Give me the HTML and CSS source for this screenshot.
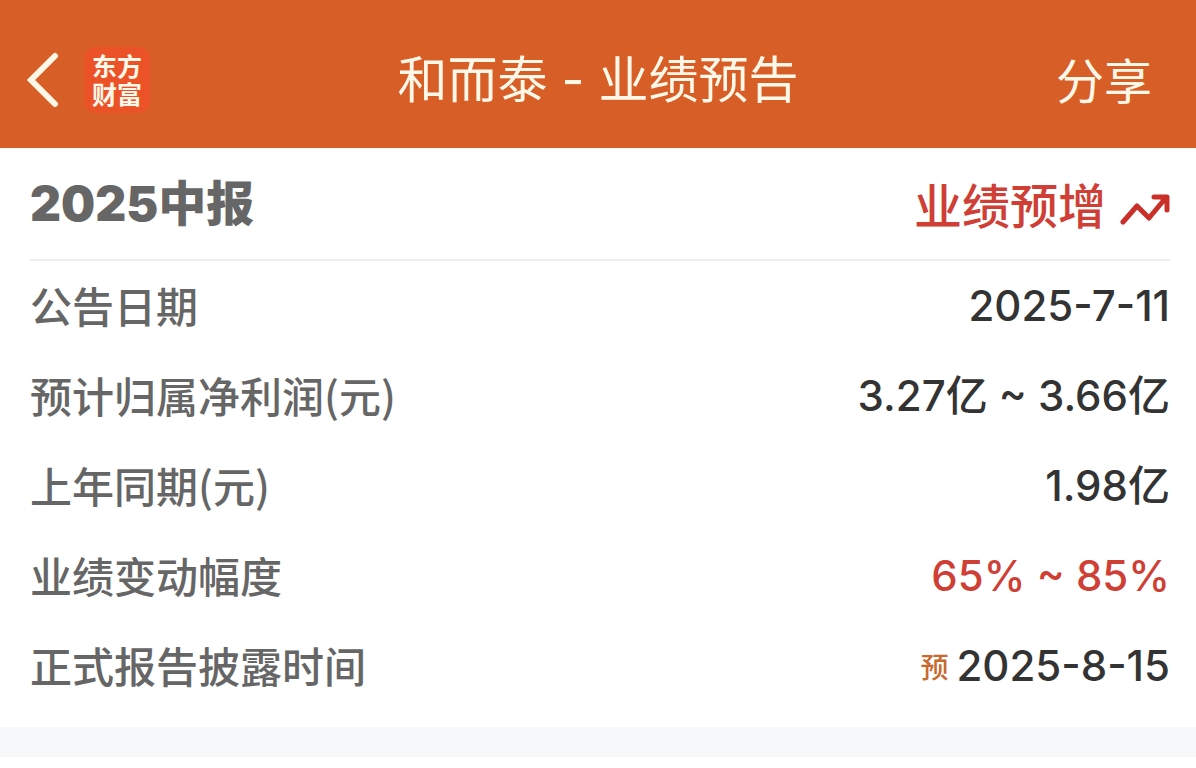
FILE: index.html
```html
<!DOCTYPE html>
<html lang="zh-CN">
<head>
    <meta charset="UTF-8">
    <meta name="viewport" content="width=device-width, initial-scale=1.0">
    <title>和而泰 - 业绩预告</title>
    <link rel="stylesheet" href="styles.css">
</head>
<body>
    <header class="navbar">
        <div class="nav-left">
            <button class="back" type="button" aria-label="返回">
                <svg width="34" height="56" viewBox="0 0 34 56" fill="none" stroke="currentColor" stroke-width="6" stroke-linecap="round" stroke-linejoin="miter">
                    <path d="M29 4L5 28L29 52"/>
                </svg>
            </button>
            <div class="logo">东方<br>财富</div>
        </div>
        <h1>和而泰 - 业绩预告</h1>
        <button class="share" type="button">分享</button>
    </header>

    <main class="report">
        <div class="report-head">
            <h2>2025中报</h2>
            <div class="trend">
                <span>业绩预增</span>
                <svg width="50" height="32" viewBox="0 0 50 32" fill="none" stroke="currentColor" stroke-width="5" stroke-linecap="round" stroke-linejoin="round">
                    <path d="M3 28L17 12L29 24L44 6"/>
                    <path d="M34 3H47V16"/>
                    <path d="M38 3H47V12Z" fill="currentColor" stroke="none"/>
                </svg>
            </div>
        </div>
        <dl class="rows">
            <div class="row">
                <dt>公告日期</dt>
                <dd>2025-7-11</dd>
            </div>
            <div class="row">
                <dt>预计归属净利润(元)</dt>
                <dd>3.27亿 ~ 3.66亿</dd>
            </div>
            <div class="row">
                <dt>上年同期(元)</dt>
                <dd>1.98亿</dd>
            </div>
            <div class="row">
                <dt>业绩变动幅度</dt>
                <dd class="up">65% ~ 85%</dd>
            </div>
            <div class="row">
                <dt>正式报告披露时间</dt>
                <dd><span class="tag">预</span>2025-8-15</dd>
            </div>
        </dl>
    </main>
    <div class="divider"></div>
</body>
</html>
```

FILE: styles.css
```css
body {
    margin: 0;
    background: #fff;
    color: #333;
    font-family: "Noto Sans CJK SC", sans-serif;
}

button {
    padding: 0;
    border: 0;
    background: none;
    color: inherit;
    font-family: inherit;
}

h1, h2, dl, dd {
    margin: 0;
}

.navbar {
    display: grid;
    grid-template-columns: 1fr auto 1fr;
    align-items: center;
    padding: 40px 26px 28px;
    background: #d75f27;
    color: #fff8e8;
}

.nav-left {
    display: flex;
    align-items: center;
    gap: 24px;
}

.back {
    display: flex;
}

.logo {
    width: 66px;
    padding: 4px 0 6px;
    border-radius: 12px;
    background: #ec5228;
    font-size: 25px;
    font-weight: 700;
    line-height: 28px;
    text-align: center;
}

h1 {
    font-family: "Inter", "Noto Sans CJK SC", sans-serif;
    font-size: 50px;
    font-weight: 400;
    line-height: 80px;
}

.share {
    justify-self: end;
    margin: 0 18px 4px 0;
    font-size: 48px;
    line-height: 76px;
}

.report {
    padding: 0 26px 16px 30px;
}

.report-head {
    display: flex;
    align-items: center;
    justify-content: space-between;
    border-bottom: 2px solid #eee;
    line-height: 111px;
}

h2 {
    color: #666;
    font-family: "Inter", "Noto Sans CJK SC", sans-serif;
    font-size: 48px;
    font-weight: 900;
}

.trend {
    display: flex;
    align-items: center;
    gap: 14px;
    color: #cf3f36;
    font-size: 48px;
    font-weight: 500;
}

.trend svg {
    margin-top: 12px;
    color: #c9302a;
}

.row {
    display: flex;
    align-items: center;
    justify-content: space-between;
    line-height: 90px;
}

dt {
    padding-bottom: 2px;
    color: #666;
    font-size: 42px;
    font-weight: 500;
    line-height: 88px;
}

dd {
    font-family: "Inter", "Noto Sans CJK SC", sans-serif;
    font-size: 42px;
    font-weight: 500;
}

.up {
    color: #cf3f36;
}

.tag {
    margin-right: 8px;
    color: #c8692f;
    font-size: 28px;
    line-height: 28px;
    vertical-align: 3px;
}

.divider {
    height: 30px;
    background: #f7f8fa;
}
```
